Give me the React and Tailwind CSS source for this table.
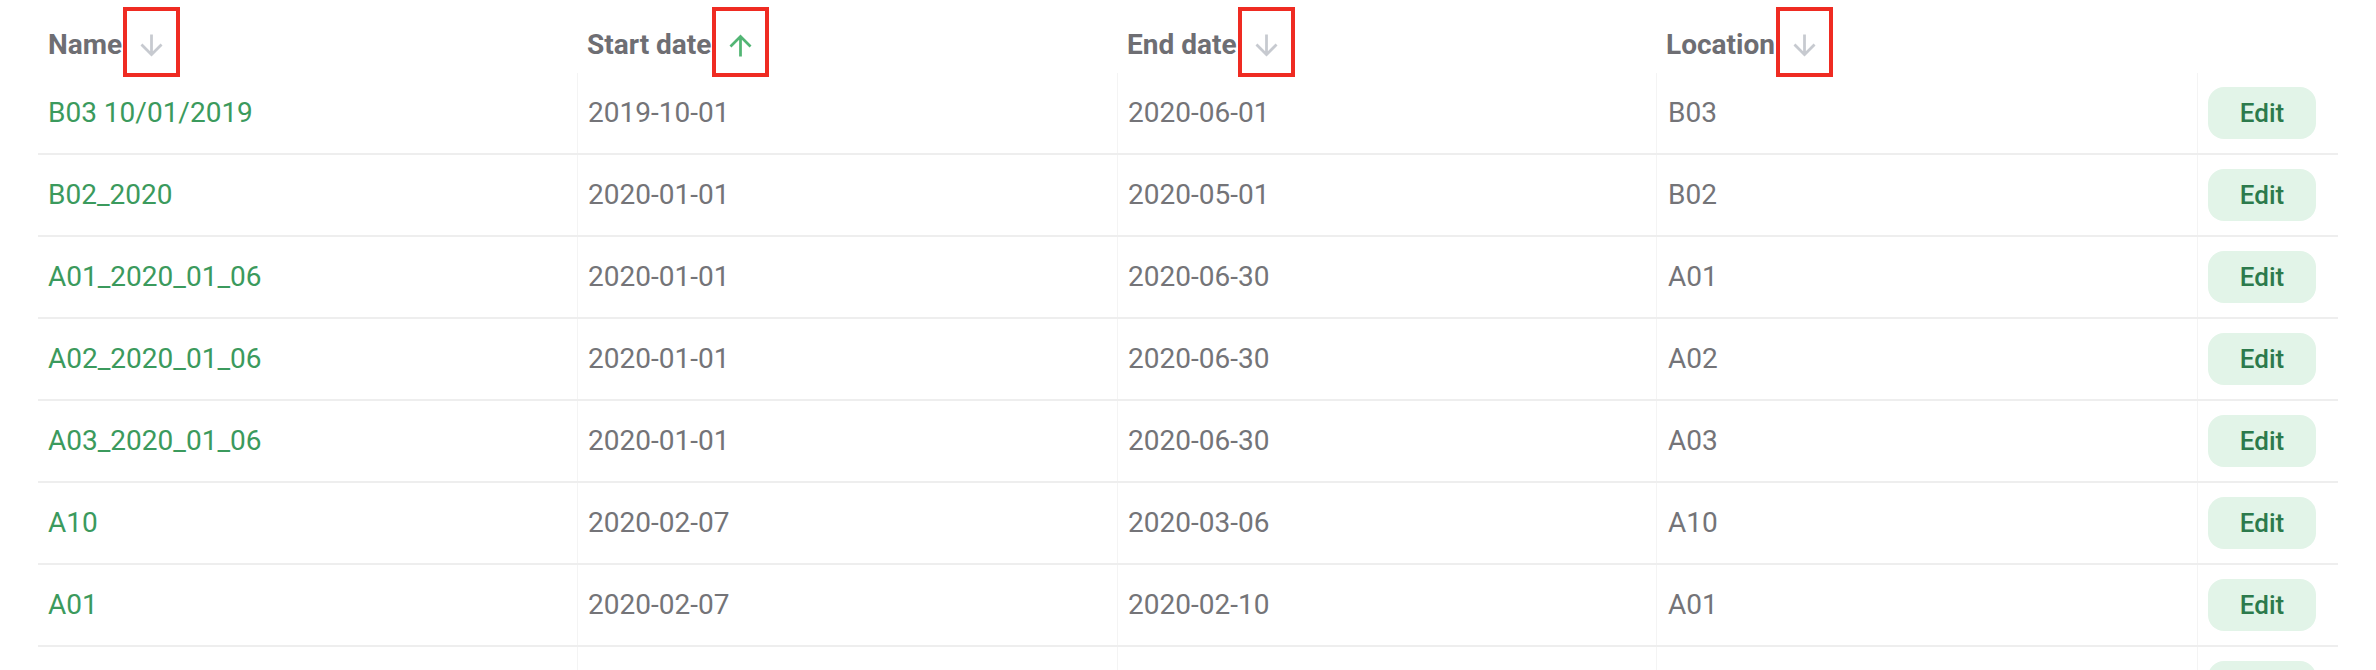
import React from "react";

// rows of the schedule table (last one only peeks in at the bottom edge)
const rows = [
  { name: "B03 10/01/2019", start: "2019-10-01", end: "2020-06-01", location: "B03" },
  { name: "B02_2020", start: "2020-01-01", end: "2020-05-01", location: "B02" },
  { name: "A01_2020_01_06", start: "2020-01-01", end: "2020-06-30", location: "A01" },
  { name: "A02_2020_01_06", start: "2020-01-01", end: "2020-06-30", location: "A02" },
  { name: "A03_2020_01_06", start: "2020-01-01", end: "2020-06-30", location: "A03" },
  { name: "A10", start: "2020-02-07", end: "2020-03-06", location: "A10" },
  { name: "A01", start: "2020-02-07", end: "2020-02-10", location: "A01" },
  { name: "", start: "", end: "", location: "" },
];

const columns = [
  { label: "Name", dir: "down", active: false, width: "w-[539px]" },
  { label: "Start date", dir: "up", active: true, width: "w-[540px]" },
  { label: "End date", dir: "down", active: false, width: "w-[539px]" },
  { label: "Location", dir: "down", active: false, width: "w-[541px]" },
];

const SortArrow = ({ dir, active }) => (
  <svg
    viewBox="0 0 24 24"
    className={`w-[33px] h-[33px] ${active ? "text-[#52b574]" : "text-[#c7cad0]"}`}
    fill="currentColor"
  >
    {dir === "up" ? (
      <path d="M4 12l1.41 1.41L11 7.83V20h2V7.83l5.58 5.59L20 12l-8-8-8 8z" />
    ) : (
      <path d="M20 12l-1.41-1.41L13 16.17V4h-2v12.17l-5.58-5.59L4 12l8 8 8-8z" />
    )}
  </svg>
);

export default function App() {
  return (
    <div className="w-[2376px] h-[670px] overflow-hidden bg-white pl-[38px] font-['Roboto','Liberation_Sans',sans-serif]">
      <div className="w-[2300px]">
        {/* header */}
        <div className="flex h-[73px]">
          {columns.map((col) => (
            <div key={col.label} className={`${col.width} flex items-start pt-[7px] pl-[10px]`}>
              <div className="flex items-center h-[70px]">
                <span className="text-[28px] font-bold text-[#6e6e73] pt-[6px] leading-none">
                  {col.label}
                </span>
                <span className="ml-[1px] w-[57px] h-[70px] border-[4px] border-[#ef2b22] flex items-center justify-center pt-[6px] relative z-10">
                  <SortArrow dir={col.dir} active={col.active} />
                </span>
              </div>
            </div>
          ))}
          <div className="w-[141px]" />
        </div>

        {/* body */}
        {rows.map((row, i) => (
          <div key={i} className="flex h-[82px] border-b-2 border-[#eeeeee]">
            <div className="w-[539px] flex items-center pl-[10px] text-[28px] text-[#3b9a5d]">
              {row.name}
            </div>
            <div className="w-[540px] flex items-center pl-[10px] border-l border-[#f4f4f4] text-[28px] text-[#747478]">
              {row.start}
            </div>
            <div className="w-[539px] flex items-center pl-[10px] border-l border-[#f4f4f4] text-[28px] text-[#747478]">
              {row.end}
            </div>
            <div className="w-[541px] flex items-center pl-[11px] border-l border-[#f4f4f4] text-[28px] text-[#747478]">
              {row.location}
            </div>
            <div className="w-[141px] flex items-center pl-[10px] border-l border-[#f4f4f4]">
              <button className="w-[108px] h-[52px] rounded-[16px] bg-[#e2f4e8] text-[26px] font-medium text-[#2c7a4c]">
                Edit
              </button>
            </div>
          </div>
        ))}
      </div>
    </div>
  );
}
